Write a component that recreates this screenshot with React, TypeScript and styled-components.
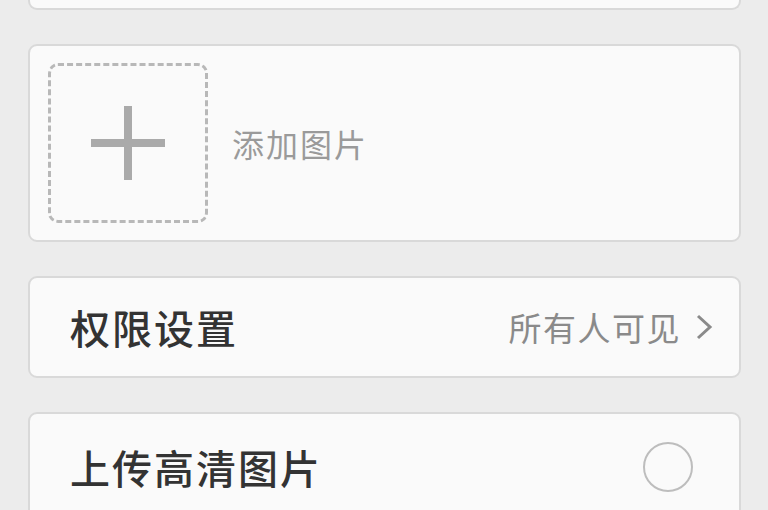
import * as React from "react";
import styled, { createGlobalStyle } from "styled-components";

const Global = createGlobalStyle`
  html, body {
    margin: 0;
    padding: 0;
    background: #ececec;
    font-family: "Noto Sans CJK SC", "Noto Sans", sans-serif;
    overflow: hidden;
  }
`;

const Page = styled.div`
  display: flex;
  flex-direction: column;
  gap: 34px;
  padding: 0 27px 0 28px;
  height: 510px;
  box-sizing: border-box;
  overflow: hidden;
`;

const Card = styled.div`
  background: #fafafa;
  border: 2px solid #d9d9d9;
  border-radius: 9px;
  box-sizing: border-box;
  flex-shrink: 0;
`;

const TopStub = styled(Card)`
  height: 10px;
  border-top: none;
  border-radius: 0 0 9px 9px;
`;

const UploadCard = styled(Card)`
  display: flex;
  align-items: center;
  gap: 24px;
  height: 198px;
  padding: 0 18px;
`;

const AddBox = styled.div`
  width: 160px;
  height: 160px;
  border: 3px dashed #b8b8b8;
  border-radius: 10px;
  box-sizing: border-box;
  display: flex;
  align-items: center;
  justify-content: center;
`;

const Hint = styled.span`
  font-size: 32px;
  letter-spacing: 2px;
  color: #9a9a9a;
`;

const Row = styled(Card)<{ $h: number }>`
  display: flex;
  align-items: center;
  justify-content: space-between;
  height: ${(p) => p.$h}px;
  padding: 0 26px 0 40px;
`;

const Label = styled.span`
  font-size: 40px;
  letter-spacing: 2px;
  font-weight: 500;
  color: #333;
`;

const Value = styled.span`
  display: flex;
  align-items: center;
  gap: 14px;
  font-size: 33px;
  letter-spacing: 1.5px;
  color: #8a8a8a;
`;

const Radio = styled.span`
  width: 50px;
  height: 50px;
  border: 2px solid #bdbdbd;
  border-radius: 50%;
  box-sizing: border-box;
  margin-right: 20px;
`;

export default function App() {
  return (
    <>
      <Global />
      <Page>
        <TopStub />
        <UploadCard>
          <AddBox>
            <svg width="74" height="74" viewBox="0 0 74 74">
              <rect x="33" y="0" width="8" height="74" fill="#aaaaaa" />
              <rect x="0" y="33" width="74" height="8" fill="#aaaaaa" />
            </svg>
          </AddBox>
          <Hint>添加图片</Hint>
        </UploadCard>
        <Row $h={102}>
          <Label>权限设置</Label>
          <Value>
            所有人可见
            <svg width="18" height="26" viewBox="0 0 18 26">
              <path d="M3 2 L15 13 L3 24" fill="none" stroke="#8a8a8a" strokeWidth="3" />
            </svg>
          </Value>
        </Row>
        <Row $h={110}>
          <Label>上传高清图片</Label>
          <Radio />
        </Row>
      </Page>
    </>
  );
}
